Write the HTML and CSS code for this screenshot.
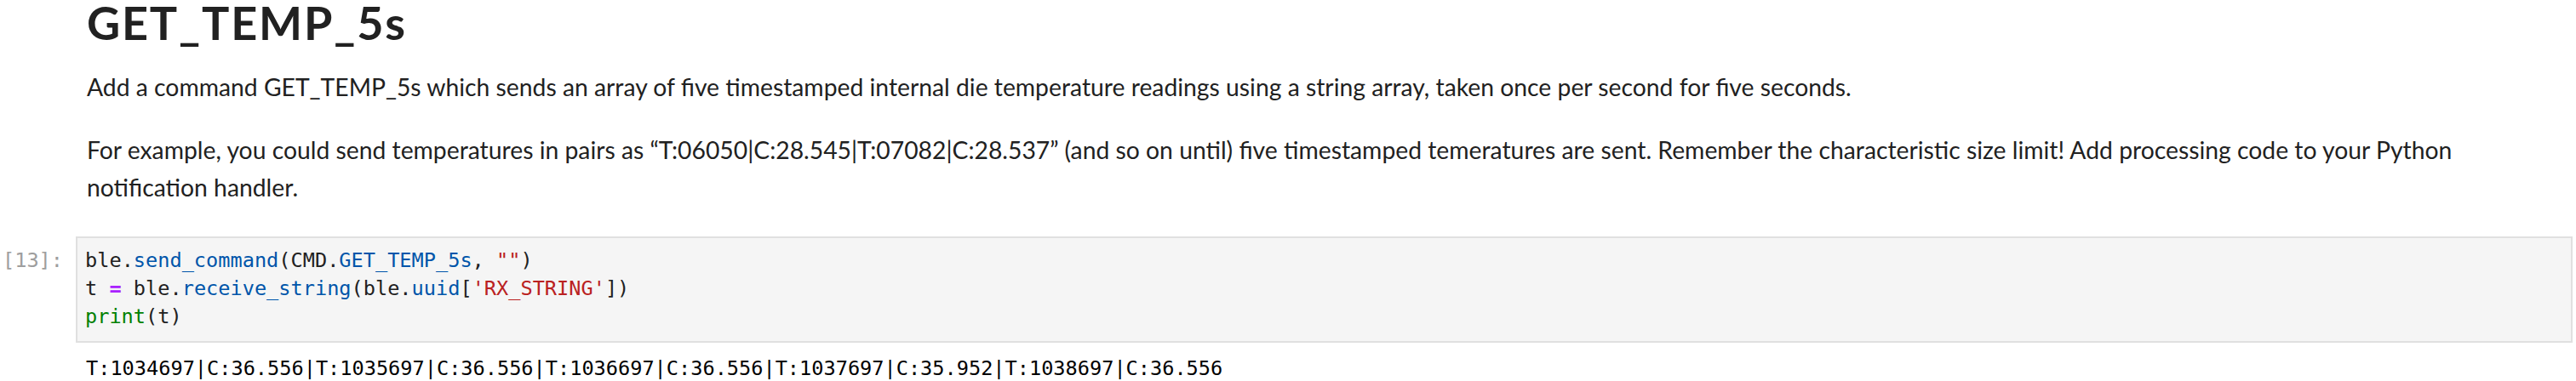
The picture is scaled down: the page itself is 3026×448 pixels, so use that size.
FILE: index.html
```html
<!DOCTYPE html>
<html>
<head>
<meta charset="utf-8">
<link rel="stylesheet" href="styles.css">
</head>
<body>
<div class="notebook">
  <div class="md-cell">
    <h2 class="md-h2">GET_TEMP_5s</h2>
    <p class="md-p">Add a command GET_TEMP_5s which sends an array of five timestamped internal die temperature readings using a string array, taken once per second for five seconds.</p>
    <p class="md-p">For example, you could send temperatures in pairs as “T:06050|C:28.545|T:07082|C:28.537” (and so on until) five timestamped temeratures are sent. Remember the characteristic size limit! Add processing code to your Python notification handler.</p>
  </div>
  <div class="code-cell">
    <div class="prompt">[13]:</div>
    <div class="editor">
      <div class="code-line"><span class="v">ble</span>.<span class="p">send_command</span>(CMD.<span class="p">GET_TEMP_5s</span>, <span class="s">""</span>)</div>
      <div class="code-line">t <span class="o">=</span> ble.<span class="p">receive_string</span>(ble.<span class="p">uuid</span>[<span class="s">'RX_STRING'</span>])</div>
      <div class="code-line"><span class="bi">print</span>(t)</div>
    </div>
  </div>
  <div class="output-cell">
    <div class="prompt out-prompt"></div>
    <div class="output">T:1034697|C:36.556|T:1035697|C:36.556|T:1036697|C:36.556|T:1037697|C:35.952|T:1038697|C:36.556</div>
  </div>
</div>
</body>
</html>
```

FILE: styles.css
```css
html, body {
  margin: 0;
  padding: 0;
  background: #ffffff;
}
body {
  width: 3026px;
  height: 448px;
  overflow: hidden;
}
.notebook {
  display: flex;
  flex-direction: column;
}
.md-cell {
  padding-left: 102px;
  padding-right: 40px;
  font-family: "Lato", "Open Sans", sans-serif;
  color: #212121;
}
.md-h2 {
  margin: 0;
  font-size: 54px;
  letter-spacing: 1.8px;
  font-weight: 700;
  line-height: 54px;
  height: 54px;
}
.md-p {
  margin: 26px 0 0 0;
  font-size: 28.3px;
  line-height: 44px;
}
.md-p + .md-p {
  margin-top: 30px;
}
.code-cell {
  display: flex;
  margin-top: 36px;
  padding-right: 4px;
}
.prompt {
  width: 89px;
  flex: none;
  box-sizing: border-box;
  padding-right: 15px;
  text-align: right;
  font-family: "DejaVu Sans Mono", monospace;
  font-size: 23.6px;
  line-height: 33px;
  color: #9e9e9e;
  padding-top: 12px;
}
.editor {
  flex: 1;
  background: #f5f5f5;
  border: 2px solid #e0e0e0;
  padding: 10px 9px 12px 9px;
}
.code-line, .output {
  margin: 0;
  font-family: "DejaVu Sans Mono", monospace;
  font-size: 23.6px;
  line-height: 33px;
  color: #212121;
  white-space: pre;
}
.code-line .p { color: #0055aa; }
.code-line .s { color: #ba2121; }
.code-line .o { color: #aa22ff; font-weight: 700; }
.code-line .bi { color: #008000; }
.output-cell {
  display: flex;
  padding-top: 14px;
}
.out-prompt {
  padding-top: 0;
}
.output {
  padding-left: 12px;
  color: #000000;
}
```
